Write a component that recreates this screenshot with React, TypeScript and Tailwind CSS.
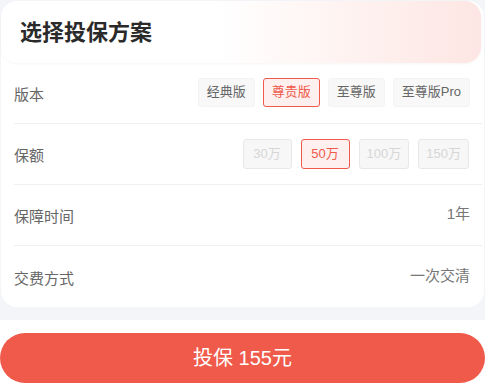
import { useState } from "react";

const versions = ["经典版", "尊贵版", "至尊版", "至尊版Pro"];
const amounts = ["30万", "50万", "100万", "150万"];

function Row({ label, children, last }: { label: string; children: React.ReactNode; last?: boolean }) {
  return (
    <div className={`flex h-[61px] items-center justify-between ${last ? "" : "border-b border-[#f0f0f0]"}`}>
      <span className="pt-[5px] text-[15px] text-[#666]">{label}</span>
      {children}
    </div>
  );
}

export default function App() {
  const [version, setVersion] = useState("尊贵版");
  const [amount, setAmount] = useState("50万");

  return (
    <div
      className="h-[392px] w-[485px] overflow-hidden bg-white"
      style={{ fontFamily: '"Liberation Sans", "Noto Sans CJK SC", sans-serif' }}
    >
      <div className="bg-[#f4f5f9] px-[1px] pt-[1px] pb-[13px]">
        <div className="rounded-[16px] bg-white">
          <div className="mr-[3px] flex h-[62px] items-center rounded-[16px] bg-gradient-to-r from-white from-45% to-[#fde6e3] pl-[19px] shadow-[0_1px_3px_rgba(0,0,0,0.04)]">
            <h1 className="text-[22px] font-bold text-[#2a2a2a]">选择投保方案</h1>
          </div>
          <div className="pl-[13px] pr-[2px]">
            <Row label="版本">
              <div className="mr-[12px] mb-[2px] flex gap-[8px]">
                {versions.map((v) => (
                  <button
                    key={v}
                    onClick={() => setVersion(v)}
                    className={`h-[29px] rounded-[3px] border px-[8px] text-[13px] ${
                      v === version
                        ? "border-[#f05a4b] bg-[#fdf0ef] text-[#f05a4b]"
                        : "border-[#f4f4f4] bg-[#f8f8f8] text-[#666]"
                    }`}
                  >
                    {v}
                  </button>
                ))}
              </div>
            </Row>
            <Row label="保额">
              <div className="mr-[13px] mb-[1px] flex gap-[9px]">
                {amounts.map((a) => (
                  <button
                    key={a}
                    onClick={() => setAmount(a)}
                    className={`h-[30px] min-w-[49px] rounded-[3px] border px-[7px] text-[13px] ${
                      a === amount
                        ? "border-[#f05a4b] bg-[#fdf0ef] text-[#f05a4b]"
                        : "border-[#e8e8e8] bg-[#f7f7f7] text-[#d6d6d6]"
                    }`}
                  >
                    {a}
                  </button>
                ))}
              </div>
            </Row>
            <Row label="保障时间">
              <span className="mr-[12px] mb-[1px] text-[15px] text-[#777]">1年</span>
            </Row>
            <Row label="交费方式" last>
              <span className="mr-[12px] mb-[1px] text-[15px] text-[#777]">一次交清</span>
            </Row>
          </div>
        </div>
      </div>
      <div className="pt-[13px]">
        <button className="h-[50px] w-full rounded-full bg-[#f05a4b] text-[20px] text-white">
          投保 155元
        </button>
      </div>
    </div>
  );
}
